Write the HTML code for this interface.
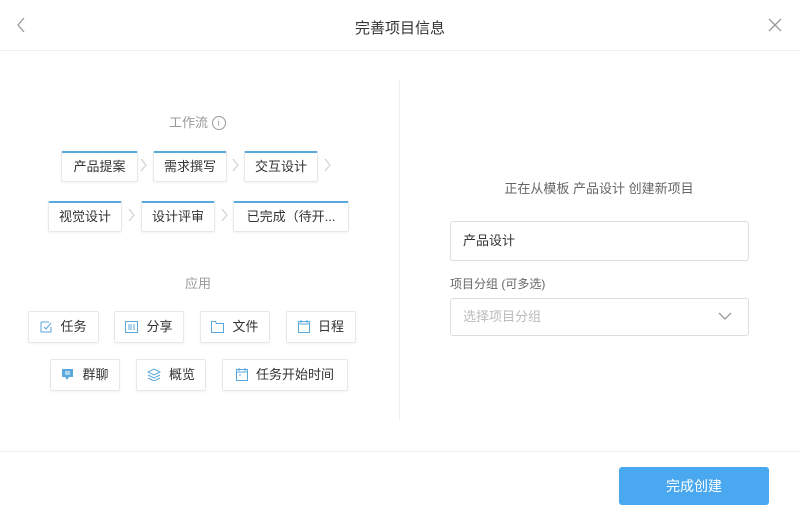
<!DOCTYPE html><html><head><meta charset="utf-8"><style>
body{margin:0;width:800px;height:519px;background:#fff;font-family:"Liberation Sans","Noto Sans CJK SC",sans-serif;position:relative;overflow:hidden;color:#333}
.a{position:absolute}
.tag{position:absolute;height:28px;border:1px solid #e8e8e8;border-top:2px solid #5aa9dc;border-radius:2px;font-size:13px;line-height:28px;text-align:center;color:#333;box-shadow:0 1px 2px rgba(0,0,0,.06)}
.ch{position:absolute}
.app{position:absolute;height:30px;border:1px solid #e8e8e8;border-radius:2px;font-size:13px;line-height:30px;text-align:center;box-shadow:0 1px 2px rgba(0,0,0,.05)}
.app svg{vertical-align:-2px;margin-right:8px}
</style></head><body>
<svg class="a" style="left:16px;top:17px" width="10" height="16"><path d="M8 1L2 8l6 7" fill="none" stroke="#999" stroke-width="1.3"/></svg>
<div class="a" style="left:0;width:800px;top:17px;text-align:center;font-size:15px;color:#333">完善项目信息</div>
<svg class="a" style="left:768px;top:18px" width="14" height="14"><path d="M1 1L13 13M13 1L1 13" stroke="#999" stroke-width="1.3"/></svg>
<div class="a" style="left:0;top:50px;width:800px;height:1px;background:#eee"></div>
<div class="a" style="left:399px;top:80px;width:1px;height:340px;background:#eee"></div>
<div class="a" style="left:0;top:451px;width:800px;height:1px;background:#eee"></div>
<div class="a" style="left:169px;top:112px;font-size:13px;color:#999">工作流 <span style="display:inline-block;width:12px;height:12px;border:1px solid #999;border-radius:50%;font-size:9px;line-height:12px;text-align:center;vertical-align:1px">i</span></div>
<div class="tag" style="left:61px;top:151px;width:75px">产品提案</div>
<div class="tag" style="left:153px;top:151px;width:72px">需求撰写</div>
<div class="tag" style="left:244px;top:151px;width:72px">交互设计</div>
<svg class="ch" style="left:140px;top:158px" width="8" height="14"><path d="M1 1l5 6-5 6" fill="none" stroke="#ccc"/></svg>
<svg class="ch" style="left:232px;top:158px" width="8" height="14"><path d="M1 1l5 6-5 6" fill="none" stroke="#ccc"/></svg>
<svg class="ch" style="left:324px;top:158px" width="8" height="14"><path d="M1 1l5 6-5 6" fill="none" stroke="#ccc"/></svg>
<div class="tag" style="left:48px;top:201px;width:72px">视觉设计</div>
<div class="tag" style="left:141px;top:201px;width:72px">设计评审</div>
<div class="tag" style="left:233px;top:201px;width:114px">已完成（待开...</div>
<svg class="ch" style="left:128px;top:208px" width="8" height="14"><path d="M1 1l5 6-5 6" fill="none" stroke="#ccc"/></svg>
<svg class="ch" style="left:221px;top:208px" width="8" height="14"><path d="M1 1l5 6-5 6" fill="none" stroke="#ccc"/></svg>
<div class="a" style="left:185px;top:273px;font-size:13px;color:#999">应用</div>
<div class="app" style="left:28px;top:311px;width:69px"><svg width="12" height="12"><path d="M1 1h8M1 1v10h10V6M4 6l2 2 5-6" fill="none" stroke="#5aa9dc"/></svg>任务</div>
<div class="app" style="left:114px;top:311px;width:68px"><svg width="13" height="12"><rect x=".5" y=".5" width="12" height="11" fill="none" stroke="#5aa9dc"/><path d="M3 4h4M3 6h4M3 8h4M9 3v6" stroke="#5aa9dc"/></svg>分享</div>
<div class="app" style="left:200px;top:311px;width:68px"><svg width="13" height="12"><path d="M.5 .5h4l1 2h7v9H.5z" fill="none" stroke="#5aa9dc"/></svg>文件</div>
<div class="app" style="left:286px;top:311px;width:68px"><svg width="12" height="13"><rect x=".5" y="1.5" width="11" height="11" fill="none" stroke="#5aa9dc"/><path d="M3 0v3M9 0v3M1 4h10" stroke="#5aa9dc"/></svg>日程</div>
<div class="app" style="left:50px;top:359px;width:68px"><svg width="13" height="13"><path d="M1 1h11v8H8l-2 3-2-3H1z" fill="#5aa9dc"/><path d="M4 4h5M4 6h5" stroke="#fff"/></svg>群聊</div>
<div class="app" style="left:136px;top:359px;width:68px"><svg width="14" height="13"><path d="M7 1l6 3-6 3-6-3zM1 7l6 3 6-3M1 10l6 3 6-3" fill="none" stroke="#5aa9dc"/></svg>概览</div>
<div class="app" style="left:222px;top:359px;width:124px"><svg width="12" height="13"><rect x=".5" y="1.5" width="11" height="11" fill="none" stroke="#5aa9dc"/><path d="M3 0v3M9 0v3M1 4h10M3 7h2" stroke="#5aa9dc"/></svg>任务开始时间</div>
<div class="a" style="left:400px;width:398px;top:178px;text-align:center;font-size:13px;color:#666">正在从模板 产品设计 创建新项目</div>
<div class="a" style="left:450px;top:221px;width:297px;height:38px;border:1px solid #ddd;border-radius:3px;font-size:13px;line-height:38px;text-indent:12px;color:#333">产品设计</div>
<div class="a" style="left:450px;top:275px;font-size:12px;color:#666">项目分组 (可多选)</div>
<div class="a" style="left:450px;top:298px;width:297px;height:36px;border:1px solid #ddd;border-radius:3px;font-size:13px;line-height:36px;text-indent:12px;color:#bbb">选择项目分组</div>
<svg class="a" style="left:718px;top:312px" width="14" height="8"><path d="M1 1l6 6 6-6" fill="none" stroke="#999" stroke-width="1.3"/></svg>
<div class="a" style="left:619px;top:467px;width:150px;height:38px;background:#4aa8f0;border-radius:3px;color:#fff;font-size:14px;line-height:38px;text-align:center">完成创建</div>
</body></html>
